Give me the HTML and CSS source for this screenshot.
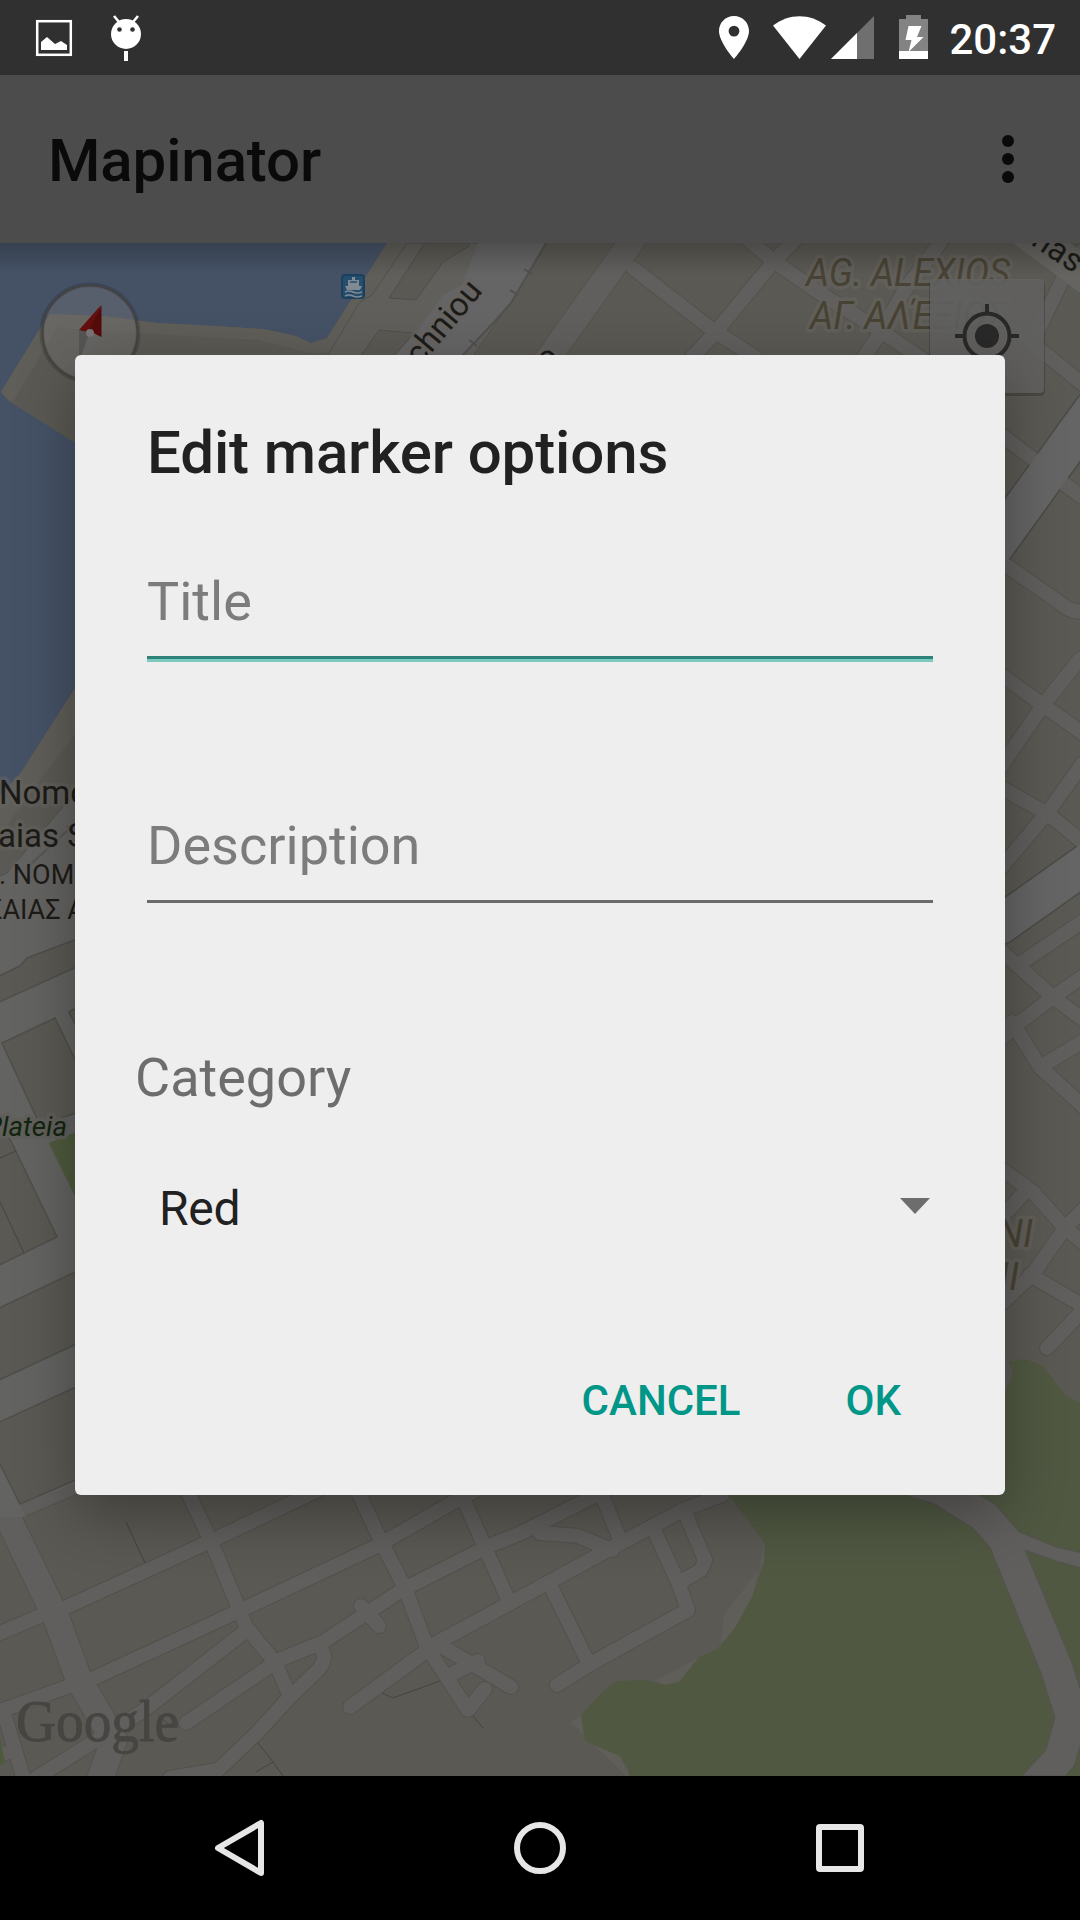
FILE: index.html
```html
<!DOCTYPE html>
<html lang="en">
<head>
<meta charset="utf-8">
<title>Mapinator</title>
<link rel="stylesheet" href="styles.css">
</head>
<body>
<div class="screen">
  <header class="status-bar">
    <svg class="status-left" width="160" height="75" viewBox="0 0 160 75">
      <rect x="37.2" y="21.2" width="33.6" height="33.6" fill="none" stroke="#fff" stroke-width="2.5"/>
      <path d="M41 42l6-5 8 7 6-3 6 4v5H41z" fill="#fff"/>
      <circle cx="126" cy="34" r="15" fill="#fff"/>
      <path d="M114 16l5 6M138 16l-5 6" stroke="#fff" stroke-width="2.6"/>
      <circle cx="119.500" cy="29.500" r="2.300" fill="#303030"/><circle cx="132.500" cy="29.500" r="2.300" fill="#303030"/>
      <path d="M124 51h4v10h-4z" fill="#fff"/>
    </svg>
    <div class="status-right">
      <svg width="230" height="75" viewBox="710 0 230 75">
        <path fill="#fff" fill-rule="evenodd" d="M734 16c-8.500 0-15 6.700-15 15 0 11 15 28 15 28s15-17 15-28c0-8.300-6.500-15-15-15zm0 9.700a5.400 5.400 0 1 1 0 10.800 5.400 5.400 0 0 1 0-10.800z"/>
        <path d="M773 25.500C789 13 810 13 826 25.500L799.500 59z" fill="#fff"/>
        <path d="M874 16v43h-43z" fill="#6f6f6f"/><path d="M857 33v26h-26z" fill="#fff"/>
        <path d="M906 15h15v4h7v40h-29V19h7z" fill="#838383"/><path d="M899 51h29v8h-29z" fill="#fff"/>
        <path d="M908.500 26h13l-4.500 11h6.500l-15 15 3-12h-6z" fill="#fff"/>
      </svg>
      <span class="clock">20:37</span>
    </div>
  </header>

  <header class="app-bar">
    <h1 class="app-title">Mapinator</h1>
    <svg class="overflow" width="12" height="48" viewBox="0 0 12 48" fill="#0a0a0a"><circle cx="6" cy="6" r="6"/><circle cx="6" cy="24" r="6"/><circle cx="6" cy="42" r="6"/></svg>
  </header>

  <main class="map">
    <svg class="map-canvas" width="1080" height="1533" viewBox="0 243 1080 1533">
      <defs>
        <g id="streets">
          <path d="M21 1510L75 1487 115 1470M0 1633L40 1616M62 1609L211 1541 314 1492 350 1475M92 1679L239 1611 377 1546 457 1500 500 1478"/>
          <path d="M180 1475L189 1495 211 1541 239 1609 246 1627 275 1662 288 1692M350 1475L382 1543 405 1588 427 1647 468 1710 485 1689M455 1480L484 1545 507 1597"/>
          <path d="M186 1723L279 1660 323 1642 402 1590 489 1546 521 1533 592 1497 620 1483M361 1606L379 1626"/>
          <path d="M350 1707L425 1652 440 1641 540 1587 619 1544 685 1509 722 1495"/>
          <path d="M436 1643L511 1687M450 1675L478 1661M318 1645Q330 1656 318 1670L288 1699 257 1733 218 1770 170 1778M243 1633L143 1711 36 1778"/>
          <path d="M0 1711L70 1686M4 1713L24 1780M0 1755L14 1750"/>
          <path d="M654 1530L678 1582 688 1610 592 1663 557 1685M686 1515L705 1560 701 1570 679 1583M550 1585L588 1662M600 1490L621 1542M540 1533L578 1536 612 1550"/>
          <path d="M1000 434L1037 462M1059 480L1085 499M1000 561L1063 605Q1070 612 1085 612M1080 659L1043 705 1000 768M1000 674L1043 705 1085 735M1083 763L1048 812 1000 869M1000 787L1048 814 1085 844M1018 965L1083 921"/>
          <path d="M1000 950L1053 997 1085 1021M1085 975L1053 997 1015 1026 1000 1040M1012 1022L1040 1067 1085 1108M1040 1067L1085 1040M1000 1168L1033 1192 1065 1228 1085 1244M1023 1194L1000 1219M1085 1208L1065 1228 1032 1275 1000 1305M1030 1275L1080 1304M1085 1308L1047 1348"/>
          <path d="M633 268L714 331 755 357M797 238L774 261 715 333 680 370M746 238L774 261 815 290 884 333 935 368M942 240L905 290 879 335 862 360M945 287L1032 343 1085 386M1032 343L1067 270 1085 248"/>
        </g>
        <g id="avenues">
          <path d="M-18 1460L9 1520 49 1603 57 1620 79 1680 114 1740 98 1785" stroke-width="26"/>
          <path d="M634 238L554 350 540 370" stroke-width="25"/>
        </g>
        <g id="boulevards"><path d="M1093 410L995 546M1000 925L1090 861"/></g>
        <linearGradient id="barShadow" x2="0" y2="1"><stop stop-opacity=".22"/><stop offset="1" stop-opacity="0"/></linearGradient>
      </defs>
      <rect y="243" width="1080" height="1533" fill="#5b5953"/>

      <!-- sea and the harbour quay -->
      <path d="M0 243H387L327 338 311 343 296 336 264 329 214 326 157 323 104 316 50 314 39 330 1 392 9 401 75 443 120 470V630L75 688 20 774 0 795z" fill="#455266"/>
      <path d="M387 243L327 338 311 343 296 336 264 329 214 326 157 323 104 316 50 314 39 330 1 392 9 401 14 400 57 328 257 340 311 353 340 352 407 243zM75 688L20 774 0 795V835L40 780 75 735z" fill="#605e58"/>

      <!-- waterfront roads -->
      <path d="M407 243L372 295 360 302 325 360H470L505 310 548 243z" fill="#605f5c" stroke="#53514c"/>
      <path d="M478 243H546L511 303 496 320 461 357H393L416 333 443 295 462 285z" fill="#656565"/>
      <path d="M425 243L389 298 416 300 443 262 469 246V243zM379 330L414 333 393 357H360z" fill="#5b5953" stroke="#504e49"/>
      <path d="M546 243L511 303 496 320 461 357M524 269l8 5M510 290l8 5M469 340l8 6" fill="none" stroke="#51504e" stroke-width="2"/>

      <g fill="none" stroke-linecap="round" stroke-linejoin="round">
        <use href="#streets" stroke="#53514c" stroke-width="16"/>
        <g stroke="#53514c" transform="translate(-1 0)"><use href="#avenues"/></g>
        <g stroke="#53514c" transform="translate(1 0)"><use href="#avenues"/></g>
        <use href="#boulevards" stroke="#4c4a46" stroke-width="41"/>
        <use href="#streets" stroke="#615f5d" stroke-width="14"/>
        <use href="#avenues" stroke="#615f5d"/>
        <use href="#boulevards" stroke="#656565" stroke-width="38"/>
        <path d="M1020 227L1090 279" stroke="#656461" stroke-width="34"/>
      </g>

      <!-- blocks on the west side -->
      <path d="M0 876L7 873 62 808 85 785V1480L20 1505 26 1517-6 1517 0 1462z" fill="#636362"/>
      <path d="M0 876L7 873 62 808 85 785" fill="none" stroke="#53514c"/>
      <g fill="#5b5953" stroke="#504e49" stroke-width="1.500">
        <path d="M-5 978L20 966 27 958 85 936V963L-5 1004zM2 1043L55 1018 85 1080V1110L40 1125zM69 1012L85 1003V1044zM-5 1130L10 1139 57 1237-5 1267zM-5 1310L73 1273 85 1277V1340L-5 1382zM-5 1424L85 1383V1476L20 1504-5 1454z"/>
      </g>
      <path d="M49 1143L85 1128V1217z" fill="#4e5a3d"/>
      <path d="M0 1738L5 1762 0 1766z" fill="#4e5a3d"/>
      <path d="M30 865L70 828M66 826l8 7" stroke="#555" stroke-width="2"/>

      <!-- park -->
      <path d="M765 1543L764 1563 724 1615 720 1650 735 1628 752 1597zM699 1657L655 1681 665 1685 679 1682zM581 1715L570 1722 626 1776H629L620 1756 585 1741z" fill="#605e58"/>
      <path d="M729 1495L765 1543 764 1563 752 1597 735 1628 717 1649 699 1657 679 1682 665 1685 645 1680 617 1681 603 1691 581 1715 585 1741 620 1756 629 1770V1776H1080V1403L1065 1395 1043 1366 1025 1359 1005 1362 900 1400z" fill="#505842"/>
      <path d="M905 1495L933 1503 973 1528 990 1547 1041 1673 1055 1717 1046 1750 1022 1776H1065L1074 1766 1082 1740V1695L1072 1663 1025 1550 1056 1561 1082 1568V1553L1056 1547 1019 1532 995 1504 979 1495 960 1480H890z" fill="#615f5d" stroke="#555250"/>
      <path d="M1000 1345L1005 1353 1013 1373 1005 1392z" fill="#5d5b59"/>

      <path d="M126 1522L145 1563M382 1693L393 1698 440 1681M473 1716L483 1728M258 1743L273 1762 283 1776M273 1762L256 1772M0 1158L16 1151M0 1202L24 1253M158 1715L168 1724 178 1724" fill="none" stroke="#45443f"/>

      <!-- map labels -->
      <g class="label label-street">
        <text transform="translate(420 367) rotate(-50)" font-size="33">chniou</text>
        <text transform="translate(1030 244) rotate(34)" font-size="33">nas</text>
        <text transform="translate(542 371) rotate(-20)" font-size="33">o</text>
        <text x="-1" y="804" font-size="33">Nomo</text>
        <text x="-2" y="847" font-size="33">aias S</text>
        <text x="-1" y="884" font-size="27">. ΝΟΜΟ</text>
        <text x="-13" y="919" font-size="27">ΣΑΙΑΣ Α</text>
      </g>
      <text class="label label-park" x="67" y="1136" font-size="28" text-anchor="end" textLength="82" lengthAdjust="spacingAndGlyphs">Plateia</text>
      <g class="label label-area" font-size="38">
        <text x="806" y="286" textLength="204" lengthAdjust="spacingAndGlyphs">AG. ALEXIOS</text>
        <text x="810" y="329" textLength="197" lengthAdjust="spacingAndGlyphs">ΑΓ. ΑΛΈΞΙΟΣ</text>
        <text x="1033" y="1247" text-anchor="end">ΝΙ</text>
        <text x="1019" y="1290" text-anchor="end">NII</text>
      </g>

      <!-- ferry terminal -->
      <rect x="342" y="275" width="22" height="23" rx="3" fill="#264d6c" stroke="#1b405e" stroke-width="2"/>
      <path d="M352 277h3v3h4v6h3l-2 4h-13l-2-4h3v-6h4z" fill="#808a92"/><path d="M345 292q4-2 8 0t9 0M345 296q4-2 8 0t9 0" fill="none" stroke="#808a92" stroke-width="1.500"/><path d="M350 282h7" stroke="#264d6c" stroke-width="1.500"/>

      <!-- compass -->
      <circle cx="90" cy="333" r="48" fill="none" stroke="#000" stroke-opacity=".15" stroke-width="5"/>
      <circle cx="90" cy="333" r="47.500" fill="#777" fill-opacity=".38" stroke="#444342" stroke-width="2"/>
      <path d="M101 305L79 330 90 335z" fill="#651010"/><path d="M101.500 305V337L88 333z" fill="#560b0b"/>
      <path d="M79 330V362L92 333z" fill="#555554"/><path d="M79 362L101 337 90 331z" fill="#656564"/><circle cx="90" cy="333" r="4" fill="#777573"/>

      <!-- my-location button -->
      <rect x="929" y="280" width="116" height="116" rx="5" fill="#000" opacity=".2"/>
      <rect x="930" y="279" width="114" height="114" rx="4" fill="#636362" fill-opacity=".88"/>
      <circle cx="987" cy="336" r="22.500" fill="none" stroke="#292929" stroke-width="4"/><circle cx="987" cy="336" r="12" fill="#292929"/>
      <path d="M987 304v9M955 336h9M1010 336h9M987 359v9" stroke="#292929" stroke-width="4"/>

      <text class="logo" x="16" y="1741" textLength="163" lengthAdjust="spacingAndGlyphs">Google</text>
      <rect y="243" width="1080" height="32" fill="url(#barShadow)"/>
    </svg>
  </main>

  <nav class="nav-bar">
    <svg width="60" height="60" viewBox="0 0 60 60"><path d="M51 5V55L8 30z"/></svg>
    <svg width="60" height="60" viewBox="0 0 60 60"><circle cx="30" cy="30" r="23"/></svg>
    <svg width="60" height="60" viewBox="0 0 60 60"><rect x="9" y="9" width="42" height="42" rx="1"/></svg>
  </nav>

  <section class="dialog">
    <h2 class="dialog-title">Edit marker options</h2>
    <div class="field field-focused">Title</div>
    <div class="field field-description">Description</div>
    <div class="category-label">Category</div>
    <div class="spinner"><span>Red</span><svg class="caret" width="30" height="16" viewBox="0 0 30 16"><path d="M0 0h30L15 16z" fill="#6d6d6d"/></svg></div>
    <div class="actions"><span>CANCEL</span><span>OK</span></div>
  </section>
</div>
</body>
</html>
```
FILE: styles.css
```css
* { box-sizing: border-box; }
body { margin: 0; background: #000; font-family: Roboto, "Noto Sans", sans-serif; }
svg { display: block; flex: none; }

.screen { position: relative; display: flex; flex-direction: column; width: 1080px; height: 1920px; overflow: hidden; }

.status-bar { display: flex; justify-content: space-between; height: 75px; background: #303030; }
.status-right { display: flex; align-items: center; gap: 9px; padding-right: 24px; }
.clock { padding-top: 4px; color: #fff; font-size: 42px; font-weight: 500; line-height: 50px; }

.app-bar { display: flex; align-items: center; justify-content: space-between; height: 168px; padding: 0 66px 0 48px; background: #4c4c4c; }
.app-title { margin: 0; padding-top: 4px; color: #0a0a0a; font-size: 60px; font-weight: 500; line-height: 70px; letter-spacing: -.12px; }

.map { height: 1533px; overflow: hidden; }
.label { stroke-width: 7px; paint-order: stroke; stroke-linejoin: round; }
.label-street { fill: #1c1b17; stroke: rgba(101, 100, 97, .55); }
.label-park { fill: #12250f; stroke: #615f5c; font-style: italic; }
.label-area { fill: #474234; stroke: rgba(99, 97, 93, .75); font-style: italic; }
.logo { fill: #474542; stroke: #474542; stroke-width: .8px; font-family: "Liberation Serif", serif; font-size: 60px; }

.nav-bar { display: flex; justify-content: center; align-items: center; gap: 240px; height: 144px; background: #000; }
.nav-bar svg { fill: none; stroke: #e6e6e6; stroke-width: 6px; stroke-linejoin: round; }

.dialog { position: absolute; top: 355px; left: 75px; width: 930px; height: 1140px; padding: 63px 72px 0; border-radius: 6px; background: #eee; box-shadow: 0 20px 60px rgba(0, 0, 0, .32); }
.dialog-title { margin: 0; color: #212121; font-size: 60px; font-weight: 500; line-height: 70px; letter-spacing: -.12px; }
.field { height: 89px; border-bottom: 3px solid #6b6b6b; color: #7c7c7c; font-size: 54px; line-height: 64px; }
.field-focused { height: 92px; margin-top: 82px; border-bottom-color: #7ccabf; box-shadow: inset 0 -3px #2f8279; }
.field-description { margin-top: 152px; }
.category-label { margin: 143px 0 0 -12px; color: #6d6d6d; font-size: 54px; line-height: 64px; }
.spinner { display: flex; justify-content: space-between; align-items: center; margin-top: 71px; padding: 0 3px 0 12px; color: #212121; font-size: 48px; line-height: 56px; letter-spacing: -.3px; }
.caret { margin-bottom: 6px; }
.actions { display: flex; justify-content: flex-end; gap: 105px; margin-top: 139px; padding-right: 32px; color: #009688; font-size: 42px; font-weight: 500; line-height: 50px; }
```
